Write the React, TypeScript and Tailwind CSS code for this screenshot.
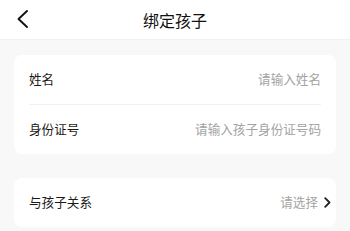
const font = { fontFamily: '"Noto Sans CJK SC", "Noto Sans", sans-serif' };

function Row({ label, placeholder, arrow }: { label: string; placeholder: string; arrow?: boolean }) {
  return (
    <div className="flex h-[49px] items-center justify-between">
      <span className="text-[12.6px] text-[#1a1a1a]">{label}</span>
      <span className="flex items-center text-[12.6px] text-[#a3a3a3]">
        {placeholder}
        {arrow && (
          <svg className="ml-[6px]" width="7" height="11" viewBox="0 0 7 11" fill="none">
            <path d="M1.2 1.2 5.5 5.5 1.2 9.8" stroke="#222" strokeWidth="1.8" strokeLinecap="round" strokeLinejoin="round" />
          </svg>
        )}
      </span>
    </div>
  );
}

export default function App() {
  return (
    <div className="h-[231px] w-[350px] bg-[#f8f8f8]" style={font}>
      <header className="relative flex h-10 items-center justify-center border-b border-[#f0f0f0] bg-white">
        <svg className="absolute left-[16px] top-[9px]" width="13" height="20" viewBox="0 0 13 20" fill="none">
          <path d="M11 2 2.5 10 11 18" stroke="#111" strokeWidth="1.9" strokeLinecap="round" strokeLinejoin="round" />
        </svg>
        <h1 className="text-[16px] text-[#111]">绑定孩子</h1>
      </header>
      <div className="px-[14px] pt-[15px]">
        <div className="rounded-lg bg-white px-[15px]">
          <Row label="姓名" placeholder="请输入姓名" />
          <div className="h-px bg-[#f2f2f2]" />
          <Row label="身份证号" placeholder="请输入孩子身份证号码" />
        </div>
        <div className="mt-[24px] rounded-lg bg-white pl-[15px] pr-[5px]">
          <Row label="与孩子关系" placeholder="请选择" arrow />
        </div>
      </div>
    </div>
  );
}
